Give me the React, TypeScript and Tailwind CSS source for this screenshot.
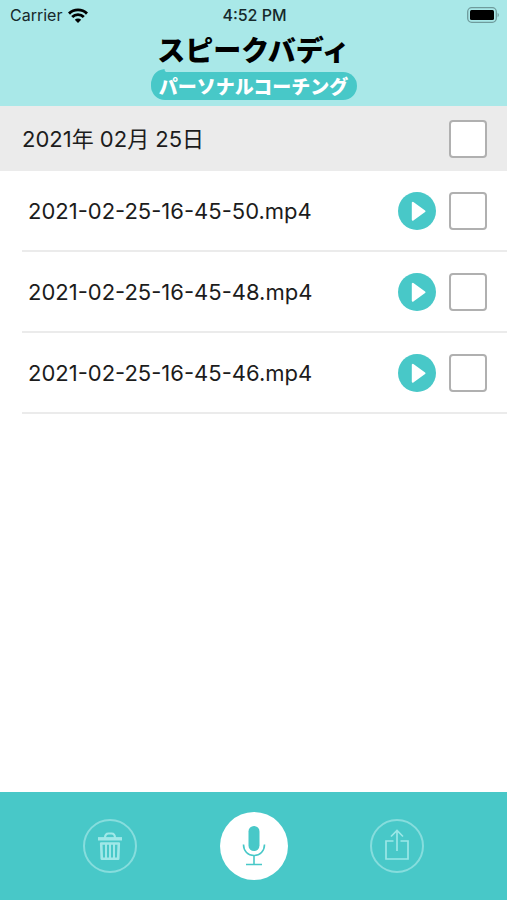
import { useState } from 'react';

interface PlayButtonProps {
  name: string;
}

interface SelectBoxProps {
  label: string;
  checked: boolean;
  onChange: (checked: boolean) => void;
}

const recordings = [
  '2021-02-25-16-45-50.mp4',
  '2021-02-25-16-45-48.mp4',
  '2021-02-25-16-45-46.mp4',
];

function StatusBar() {
  return (
    <div className="grid h-[30px] grid-cols-3 items-center pl-[10px] pr-2 text-[#16292b]">
      <div className="flex items-center gap-[6px]">
        <span className="text-base">Carrier</span>
        <svg className="h-[15px] w-5" viewBox="0 0 20 15" fill="none" stroke="#000" strokeWidth="2.9">
          <path d="M1 5.6a12.8 12.8 0 0 1 18 0" />
          <path d="M4.2 9a8.2 8.2 0 0 1 11.6 0" />
          <path d="M10 15 6.8 11.8a4.6 4.6 0 0 1 6.4 0z" fill="#000" stroke="none" />
        </svg>
      </div>
      <span className="text-center text-base font-medium">4:52 PM</span>
      <svg className="h-4 w-8 justify-self-end" viewBox="0 0 32 16" fill="none">
        <rect x="0.7" y="0.7" width="28.6" height="14.6" rx="4" stroke="#6f9b9c" strokeWidth="1.3" />
        <rect x="3" y="3" width="24" height="10" rx="1.5" fill="#000" />
        <path d="M30.6 5.8c1.6.8 1.6 3.6 0 4.4z" fill="#6f9b9c" />
      </svg>
    </div>
  );
}

function Logo() {
  return (
    <h1 className="flex flex-col items-center font-['Noto_Sans_CJK_JP',sans-serif] font-black whitespace-nowrap">
      <span className="h-[42px] text-[28px] leading-[38px] text-black">スピークバディ</span>
      <span className="relative flex h-7 w-[206px] items-center justify-center rounded-full bg-[#48c8c8] text-[19px] leading-7 text-white">
        <svg className="absolute -top-[3px] left-0 h-[17px] w-5" viewBox="0 0 20 17" fill="#48c8c8">
          <path d="M0 17C0 8 4 1 13.5 0c0 2 .8 3 3 3.4L20 17z" />
        </svg>
        <span className="relative">パーソナルコーチング</span>
      </span>
    </h1>
  );
}

function SelectBox({ label, checked, onChange }: SelectBoxProps) {
  return (
    <input
      type="checkbox"
      aria-label={label}
      checked={checked}
      onChange={(e) => onChange(e.target.checked)}
      className="size-[38px] shrink-0 appearance-none rounded-[4px] border-2 border-[#b0b0b0] bg-white checked:bg-[#48c8c8]"
    />
  );
}

function PlayButton({ name }: PlayButtonProps) {
  return (
    <button
      type="button"
      aria-label={`Play ${name}`}
      className="size-[38px] shrink-0 rounded-full bg-[#48c8c8]"
    >
      <svg className="size-full" viewBox="0 0 38 38" fill="#fff" stroke="#fff" strokeWidth="2" strokeLinejoin="round">
        <path d="M14.800 10.800v17L26.500 19.300z" />
      </svg>
    </button>
  );
}

function Toolbar() {
  return (
    <footer className="flex h-[108px] items-center justify-between bg-[#48c8c8] px-[83px]">
      <button
        type="button"
        aria-label="Delete"
        className="flex size-[54px] items-center justify-center rounded-full border-2 border-[#86dddd]"
      >
        <svg className="h-7 w-6" viewBox="0 0 24 28" fill="none" stroke="#a0e8e8" strokeWidth="2.200">
          <path d="M7 6c0-3 1.500-4.500 3.500-4.500h3c2 0 3.500 1.500 3.500 4.500" />
          <path d="M0 6.800h24" strokeWidth="3.400" />
          <path d="M3.200 11.500h17.600l-.6 15.200H3.800z" strokeWidth="2.600" strokeLinejoin="round" />
          <path d="M8 12v14M12 12v14M16 12v14" strokeWidth="2" />
        </svg>
      </button>
      <button
        type="button"
        aria-label="Record"
        className="flex size-[68px] items-center justify-center rounded-full bg-white"
      >
        <svg className="h-10 w-6" viewBox="0 0 24 40" fill="none" stroke="#48c8c8" strokeWidth="1.600">
          <rect x="6.500" y="0" width="11" height="25" rx="5.500" fill="#48c8c8" stroke="none" />
          <path d="M1.500 18.500c0 6.500 4.500 11 10.500 11s10.500-4.500 10.500-11" />
          <path d="M12 29.500v9M4 38.500h16" />
        </svg>
      </button>
      <button
        type="button"
        aria-label="Share"
        className="flex size-[54px] items-center justify-center rounded-full border-2 border-[#86dddd]"
      >
        <svg className="mb-1 h-[31px] w-6" viewBox="0 0 24 31" fill="none" stroke="#9be7e7" strokeWidth="1.700">
          <path d="M8.500 12H1v18h22V12h-7.500" />
          <path d="M12 22V2M6 7.500l6-6 6 6" />
        </svg>
      </button>
    </footer>
  );
}

export default function App() {
  const [selected, setSelected] = useState<string[]>([]);

  const toggle = (name: string, checked: boolean) => {
    setSelected((prev) => (checked ? [...prev, name] : prev.filter((item) => item !== name)));
  };

  return (
    <div className="flex min-h-screen flex-col bg-white font-[Inter,'Noto_Sans_CJK_JP',sans-serif] text-[#1c1c1c]">
      <header className="h-[106px] bg-[#a9e8e8]">
        <StatusBar />
        <Logo />
      </header>

      <main className="flex-1">
        <div className="flex h-[65px] items-center justify-between bg-[#ebebeb] pr-5 pl-[22px]">
          <h2 className="pt-0.5 text-[22px]">2021年 02月 25日</h2>
          <SelectBox
            label="2021年 02月 25日"
            checked={selected.length === recordings.length}
            onChange={(checked) => setSelected(checked ? recordings : [])}
          />
        </div>
        <ul className="pl-[22px]">
          {recordings.map((name) => (
            <li key={name} className="flex h-[81px] items-center border-b-2 border-[#ebebeb] pr-5 pl-[6px]">
              <span className="flex-1 pt-0.5 text-[22px]">{name}</span>
              <div className="flex gap-[13px]">
                <PlayButton name={name} />
                <SelectBox
                  label={name}
                  checked={selected.includes(name)}
                  onChange={(checked) => toggle(name, checked)}
                />
              </div>
            </li>
          ))}
        </ul>
      </main>

      <Toolbar />
    </div>
  );
}
